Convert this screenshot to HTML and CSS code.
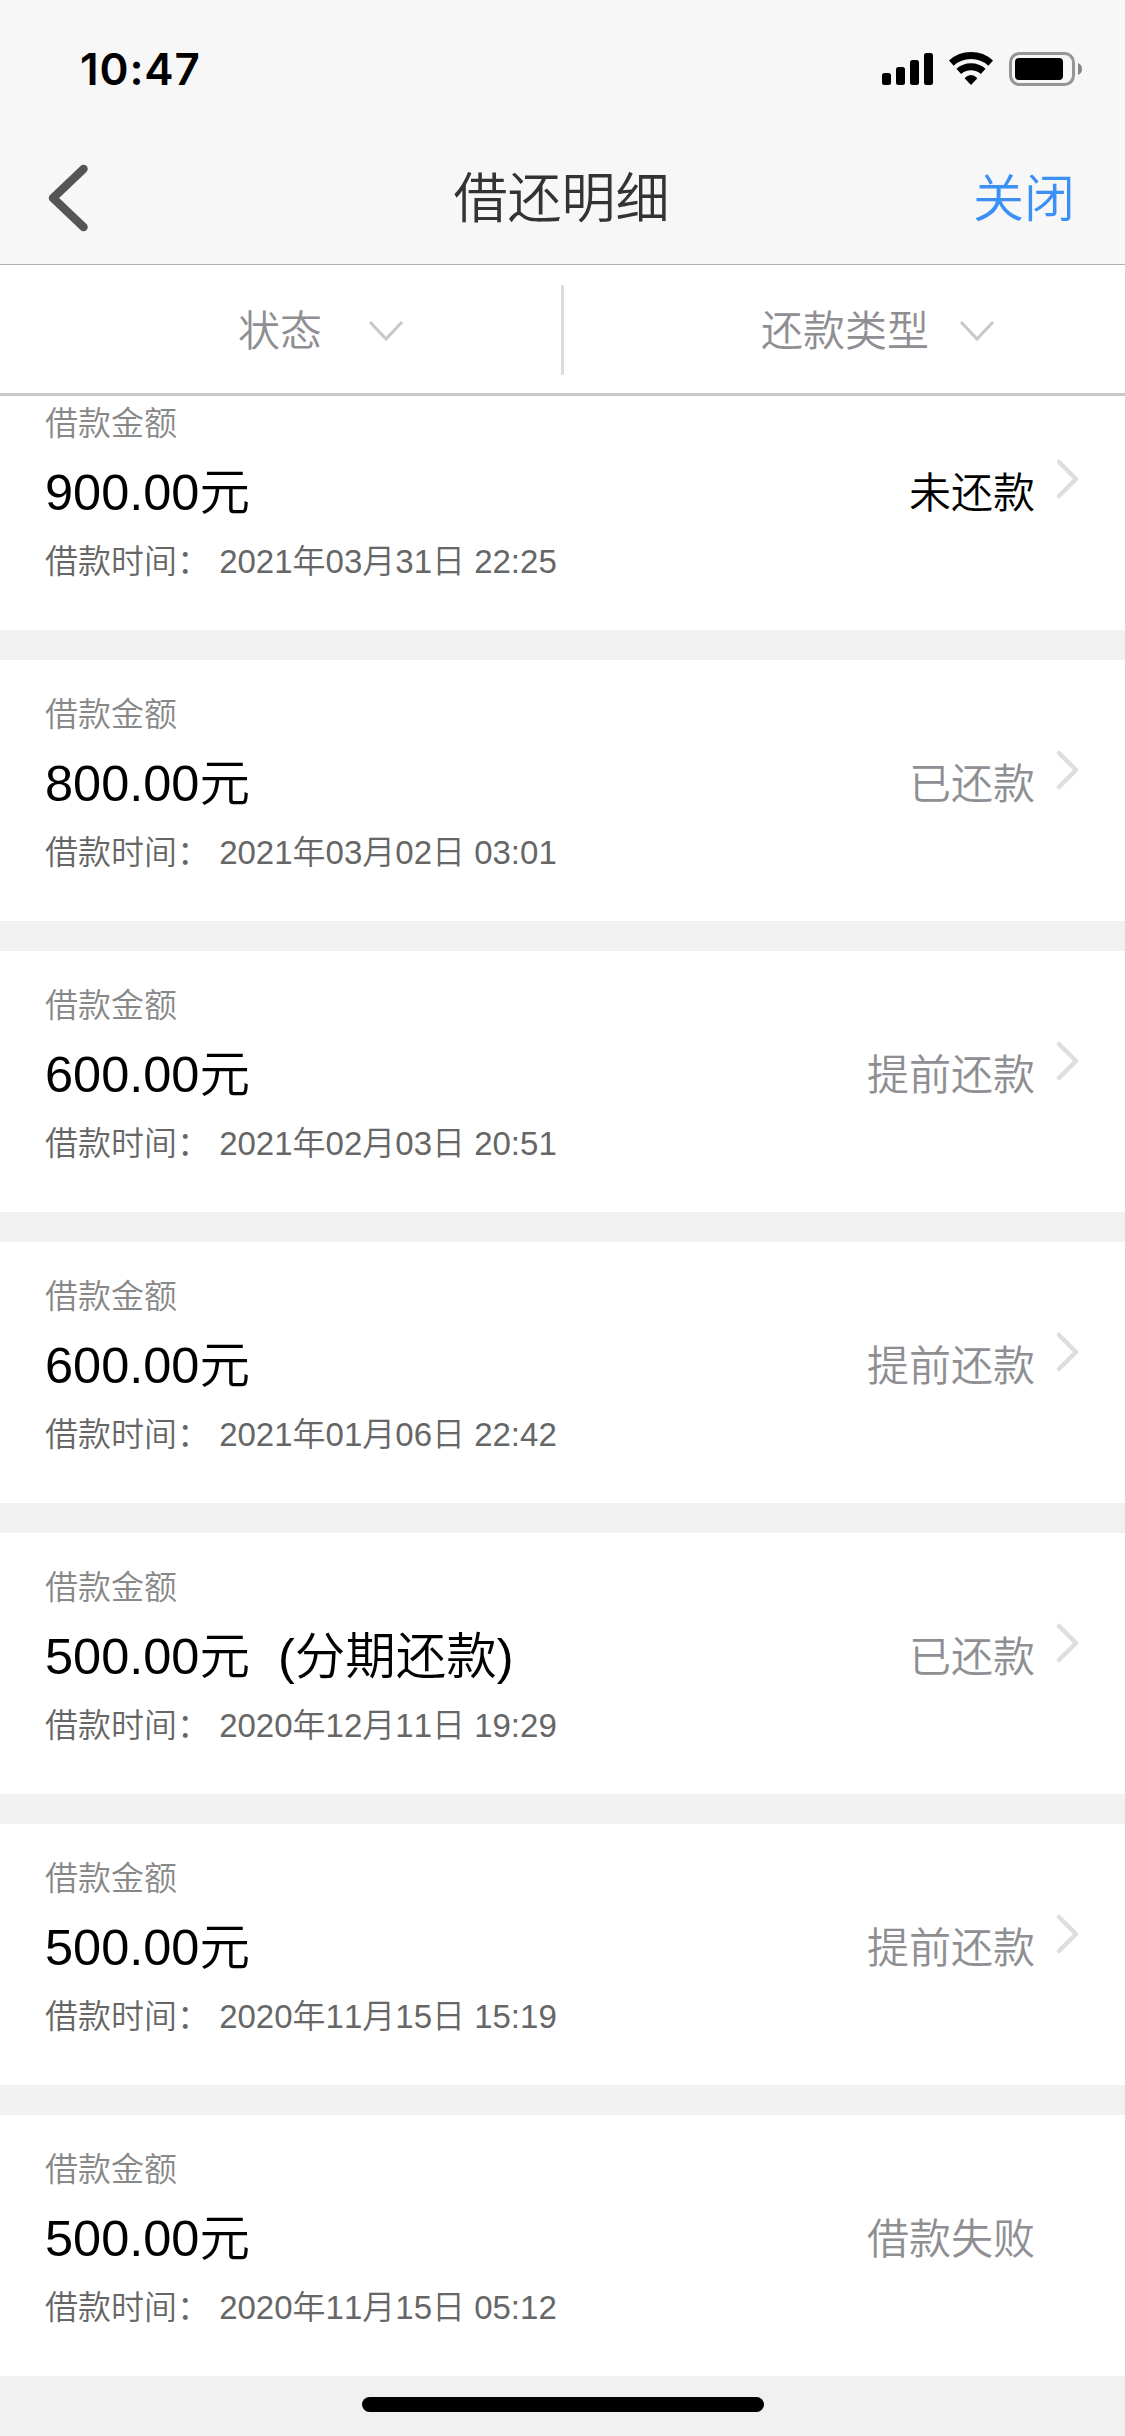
FILE: index.html
```
<!DOCTYPE html>
<html lang="zh-CN">
<head>
    <meta charset="UTF-8">
    <title>借还明细</title>
    <link rel="stylesheet" href="styles.css">
</head>
<body>

<header>
    <div class="status-bar">
        <span class="clock">10:47</span>
        <svg class="status-icons" width="201" height="36" viewBox="0 0 201 36">
            <!-- signal -->
            <rect x="0" y="22" width="9" height="12" rx="2.5"/>
            <rect x="14" y="16" width="9" height="18" rx="2.5"/>
            <rect x="28" y="9" width="9" height="25" rx="2.5"/>
            <rect x="42" y="2" width="9" height="32" rx="2.5"/>
            <!-- wifi -->
            <g fill="none" stroke="#000" stroke-width="7">
                <path d="M69.3 12.1A29.5 29.5 0 0 1 108.7 12.1"/>
                <path d="M76.8 20.4A18.3 18.3 0 0 1 101.2 20.4"/>
            </g>
            <path d="M89 34L82.6 27.2Q89 21 95.4 27.2Z"/>
            <!-- battery -->
            <rect x="128.5" y="2.5" width="63" height="31" rx="9" fill="none" stroke="#959595" stroke-width="3"/>
            <rect x="133" y="7" width="48" height="22" rx="4"/>
            <path d="M196 12Q200 13.5 200 18T196 24Z" fill="#888"/>
        </svg>
    </div>
    <div class="nav">
        <svg class="back" width="40" height="68" viewBox="0 0 40 68">
            <path d="M35.5 5L5 34L35.5 63" fill="none" stroke="#555" stroke-width="8.5" stroke-linecap="round" stroke-linejoin="round"/>
        </svg>
        <h1>借还明细</h1>
        <a class="close">关闭</a>
    </div>
</header>

<div class="filters">
    <div class="filter filter-status">
        <span>状态</span>
        <svg width="36" height="22" viewBox="0 0 36 22"><path d="M2 2L18 19L34 2"/></svg>
    </div>
    <div class="filter filter-type">
        <span>还款类型</span>
        <svg width="36" height="22" viewBox="0 0 36 22"><path d="M2 2L18 19L34 2"/></svg>
    </div>
</div>

<main>
    <div class="record record-cut">
        <div class="info">
            <p class="label">借款金额</p>
            <p class="amount">900.00元</p>
            <p class="time">借款时间： 2021年03月31日 22:25</p>
        </div>
        <span class="state unpaid">未还款</span>
        <svg class="arrow" width="24" height="40" viewBox="0 0 24 40"><path d="M3 3L20 20L3 37"/></svg>
    </div>
    <div class="record">
        <div class="info">
            <p class="label">借款金额</p>
            <p class="amount">800.00元</p>
            <p class="time">借款时间： 2021年03月02日 03:01</p>
        </div>
        <span class="state">已还款</span>
        <svg class="arrow" width="24" height="40" viewBox="0 0 24 40"><path d="M3 3L20 20L3 37"/></svg>
    </div>
    <div class="record">
        <div class="info">
            <p class="label">借款金额</p>
            <p class="amount">600.00元</p>
            <p class="time">借款时间： 2021年02月03日 20:51</p>
        </div>
        <span class="state">提前还款</span>
        <svg class="arrow" width="24" height="40" viewBox="0 0 24 40"><path d="M3 3L20 20L3 37"/></svg>
    </div>
    <div class="record">
        <div class="info">
            <p class="label">借款金额</p>
            <p class="amount">600.00元</p>
            <p class="time">借款时间： 2021年01月06日 22:42</p>
        </div>
        <span class="state">提前还款</span>
        <svg class="arrow" width="24" height="40" viewBox="0 0 24 40"><path d="M3 3L20 20L3 37"/></svg>
    </div>
    <div class="record">
        <div class="info">
            <p class="label">借款金额</p>
            <p class="amount">500.00元  (分期还款)</p>
            <p class="time">借款时间： 2020年12月11日 19:29</p>
        </div>
        <span class="state">已还款</span>
        <svg class="arrow" width="24" height="40" viewBox="0 0 24 40"><path d="M3 3L20 20L3 37"/></svg>
    </div>
    <div class="record">
        <div class="info">
            <p class="label">借款金额</p>
            <p class="amount">500.00元</p>
            <p class="time">借款时间： 2020年11月15日 15:19</p>
        </div>
        <span class="state">提前还款</span>
        <svg class="arrow" width="24" height="40" viewBox="0 0 24 40"><path d="M3 3L20 20L3 37"/></svg>
    </div>
    <div class="record">
        <div class="info">
            <p class="label">借款金额</p>
            <p class="amount">500.00元</p>
            <p class="time">借款时间： 2020年11月15日 05:12</p>
        </div>
        <span class="state">借款失败</span>
        <span class="arrow"></span>
    </div>
</main>

<div class="home-bar"></div>

</body>
</html>
```

FILE: styles.css
```
* {
    box-sizing: border-box;
}
body {
    font-family: "Liberation Sans", "Noto Sans CJK SC", sans-serif;
    font-weight: 350;
    font-kerning: none;
    background: #f1f1f1;
    margin: 0;
    color: #000;
}
h1, p {
    margin: 0;
}
svg {
    display: block;
}

/* header */
header {
    height: 265px;
    background: #f7f7f7;
    border-bottom: 1px solid #b2b2b2;
}
.status-bar {
    display: flex;
    justify-content: space-between;
    align-items: flex-start;
    height: 132px;
    padding: 51px 42px 0 80px;
}
.clock {
    font-family: Inter, sans-serif;
    font-size: 44px;
    font-weight: 600;
    line-height: 36px;
    letter-spacing: 0.9px;
}
.nav {
    display: grid;
    grid-template-columns: 1fr auto 1fr;
    align-items: center;
    height: 132px;
    padding: 0 50px 0 48px;
}
h1 {
    padding-top: 2px;
    font-size: 54px;
    font-weight: 350;
    line-height: 80px;
    color: #333;
}
.close {
    justify-self: end;
    padding-top: 4px;
    font-size: 51px;
    line-height: 80px;
    color: #3a90f4;
}

/* filters */
.filters {
    display: flex;
    height: 131px;
    background: #fff;
    border-bottom: 3px solid #c8c8c8;
}
.filter {
    display: flex;
    align-items: center;
    font-size: 42px;
    line-height: 60px;
    color: #8e8e93;
    height: 90px;
    margin-top: 20px;
}
.filter span {
    padding-top: 3px;
}
.filter svg {
    margin-top: 2px;
}
.filter path {
    fill: none;
    stroke: #c8c8c8;
    stroke-width: 3;
}
.filter-status {
    width: 564px;
    padding-left: 238px;
    gap: 46px;
    border-right: 3px solid #dcdcdc;
}
.filter-type {
    padding-left: 197px;
    gap: 30px;
}

/* records */
.record {
    display: flex;
    height: 261px;
    padding: 31px 45px 0;
    margin-bottom: 30px;
    background: #fff;
}
/* first record is scrolled under the filter bar */
.record-cut {
    height: 234px;
    padding-top: 4px;
}
.info {
    flex: 1;
}
.info p {
    white-space: pre;
}
.label {
    font-size: 33px;
    line-height: 48px;
    color: #888;
}
.amount {
    font-size: 50.5px;
    line-height: 90px;
}
.time {
    font-size: 33px;
    line-height: 48px;
    color: #666;
}
.state {
    margin-top: 64px;
    font-size: 42px;
    line-height: 60px;
    color: #8e8e93;
}
.unpaid {
    color: #000;
}
.arrow {
    width: 24px;
    margin: 59px 0 0 21px;
}
.arrow path {
    fill: none;
    stroke: #dedede;
    stroke-width: 4.5;
    stroke-linecap: round;
    stroke-linejoin: round;
}

.home-bar {
    width: 402px;
    height: 15px;
    margin: -9px auto 0;
    border-radius: 8px;
    background: #000;
}
```
